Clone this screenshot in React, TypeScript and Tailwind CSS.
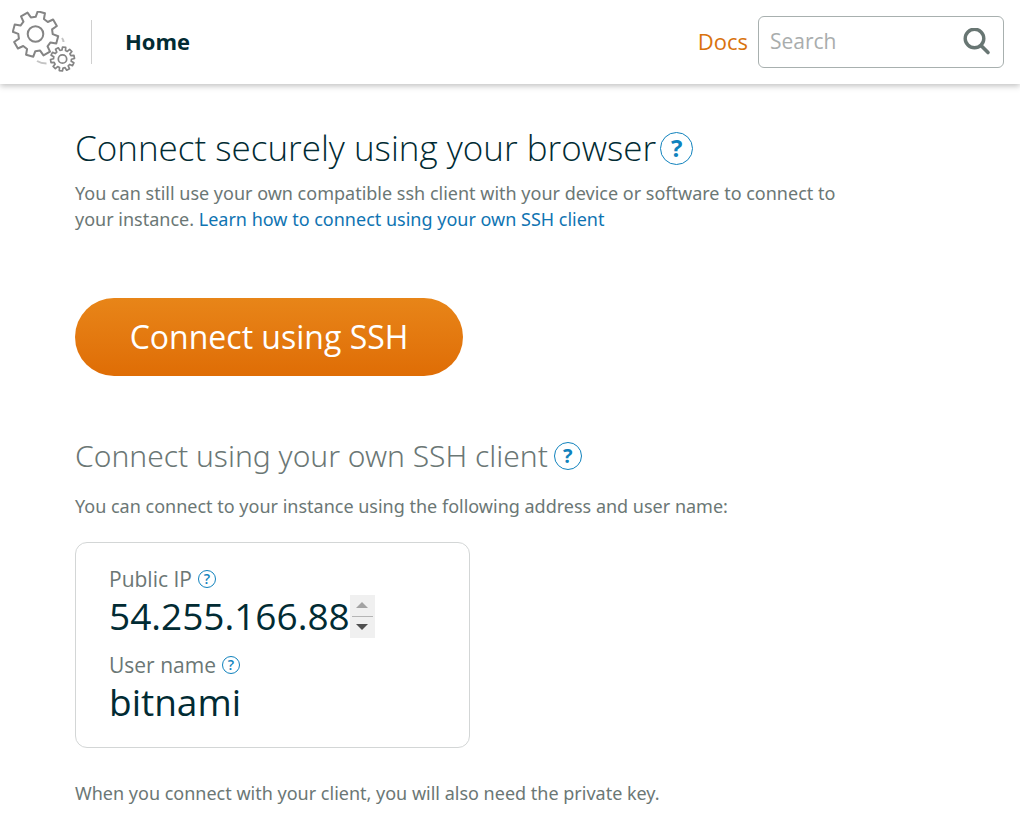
import type { ReactNode } from "react";

function gearPoints(cx: number, cy: number, outer: number, inner: number, teeth: number, phase: number) {
  const step = 360 / teeth;
  const corners: [number, number][] = [
    [-0.32, inner],
    [-0.21, outer],
    [0.21, outer],
    [0.32, inner],
  ];
  const points: string[] = [];
  for (let i = 0; i < teeth; i++) {
    for (const [offset, radius] of corners) {
      const angle = ((phase + (i + offset) * step) * Math.PI) / 180;
      points.push(`${(cx + radius * Math.sin(angle)).toFixed(2)},${(cy - radius * Math.cos(angle)).toFixed(2)}`);
    }
  }
  return points.join(" ");
}

function GearsLogo() {
  return (
    <svg viewBox="0 0 64 62" className="h-[62px] w-16" fill="none" stroke="#858585" strokeLinejoin="round" aria-hidden="true">
      <polygon points={gearPoints(23.5, 23, 22.8, 17.2, 8, 15)} strokeWidth="2" />
      <circle cx="23.5" cy="23" r="7.8" strokeWidth="2" />
      <polygon points={gearPoints(50.5, 48, 12, 9, 10, 8)} strokeWidth="1.7" fill="#fff" />
      <circle cx="50.5" cy="48" r="4.2" strokeWidth="1.7" />
      <path d="M50 27q1.500 2 1.500 4M25 50q4 2.500 9.500 2.500" stroke="#c4c4c4" strokeWidth="2" />
    </svg>
  );
}

function SearchIcon() {
  return (
    <svg viewBox="0 0 28 28" className="size-7" fill="none" stroke="#687673" aria-hidden="true">
      <circle cx="11.500" cy="10.500" r="9.300" strokeWidth="3.400" />
      <path d="M18.500 18l6.500 6.500" strokeWidth="3.600" strokeLinecap="round" />
    </svg>
  );
}

function Help({ label, className }: { label: string; className: string }) {
  return (
    <button
      type="button"
      aria-label={label}
      className={`flex shrink-0 items-center justify-center rounded-full border border-[#1082bd] leading-none text-[#1082bd] ${className}`}
    >
      ?
    </button>
  );
}

function Field({ name, children }: { name: string; children: ReactNode }) {
  return (
    <div>
      <dt className="flex items-center gap-1.5 text-[21px] leading-7 text-[#6b7775]">
        {name}
        <Help label={`About ${name}`} className="size-[18px] text-sm font-semibold" />
      </dt>
      <dd className="flex h-[46px] items-center text-[37px] leading-[46px] text-[#012b33]">{children}</dd>
    </div>
  );
}

export default function App() {
  return (
    <div className="min-h-screen bg-white font-['Open_Sans','Noto_Sans',sans-serif] text-[#6b7775]">
      <header className="flex h-[84px] items-center bg-white pr-4 pl-3 shadow-[0_2px_6px_rgba(0,0,0,0.25)]">
        <GearsLogo />
        <div className="ml-[15px] h-11 w-px bg-[#d0d0d0]" />
        <nav className="ml-[33px] flex grow items-center justify-between pb-0.5">
          <a href="#home" className="text-[22px] leading-8 font-bold text-[#012b33]">Home</a>
          <a href="#docs" className="mr-2.5 text-[22px] leading-8 text-[#d9730d]">Docs</a>
        </nav>
        <form role="search" className="flex h-[52px] w-[246px] items-center rounded-md border border-[#a8b0af] pr-3 pl-[11px]">
          <input
            type="search"
            aria-label="Search"
            placeholder="Search"
            className="w-0 grow bg-transparent text-[21px] outline-none placeholder:text-[#a9adad]"
          />
          <button type="button" aria-label="Submit search">
            <SearchIcon />
          </button>
        </form>
      </header>

      <main className="px-[75px] pt-10">
        <div className="flex items-center gap-1">
          <h1 className="text-[35px] leading-[48px] font-light text-[#012b33]">
            Connect securely using your browser
          </h1>
          <Help label="About browser connections" className="size-[33px] text-2xl font-bold" />
        </div>
        <p className="mt-2 max-w-[800px] font-['Noto_Sans','Open_Sans',sans-serif] text-lg leading-[26px]">
          You can still use your own compatible ssh client with your device or software to connect to your instance.{" "}
          <a href="#learn" className="text-[#0f74b2]">Learn how to connect using your own SSH client</a>
        </p>

        <button
          type="button"
          className="mt-[66px] flex h-[78px] w-[388px] items-center justify-center rounded-full bg-linear-to-b from-[#e88518] to-[#df6d05] text-[32px] text-white"
        >
          Connect using SSH
        </button>

        <div className="mt-[60px] flex items-center gap-1.5">
          <h2 className="font-['Noto_Sans','Open_Sans',sans-serif] text-[30px] leading-10 font-light">Connect using your own SSH client</h2>
          <Help label="About SSH clients" className="size-7 text-xl font-bold" />
        </div>
        <p className="mt-[17px] font-['Noto_Sans','Open_Sans',sans-serif] text-lg leading-[26px]">
          You can connect to your instance using the following address and user name:
        </p>

        <dl className="mt-[23px] flex w-[395px] flex-col gap-3 rounded-xl border border-[#d3d6d6] px-[33px] pt-[22px] pb-[22px]">
          <Field name="Public IP">
            54.255.166.88
            <span className="flex h-[43px] w-[25px] flex-col items-center bg-[#f0f0f0]">
              <button type="button" aria-label="Previous address" className="flex w-full grow items-center justify-center">
                <svg viewBox="0 0 12 6" className="h-1.5 w-3" fill="#a3a3a3"><path d="M0 6L6 0l6 6z" /></svg>
              </button>
              <span className="h-px w-[21px] bg-[#b5b5b5]" />
              <button type="button" aria-label="Next address" className="flex w-full grow items-center justify-center">
                <svg viewBox="0 0 12 6" className="h-1.5 w-3" fill="#505050"><path d="M0 0l6 6 6-6z" /></svg>
              </button>
            </span>
          </Field>
          <Field name="User name">bitnami</Field>
        </dl>

        <p className="mt-8 font-['Noto_Sans','Open_Sans',sans-serif] text-lg leading-[26px]">
          When you connect with your client, you will also need the private key.
        </p>
      </main>
    </div>
  );
}
